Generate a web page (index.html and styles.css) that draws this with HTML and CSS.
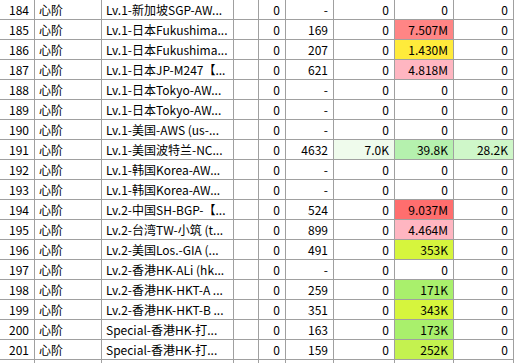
FILE: index.html
```html
<!DOCTYPE html>
<html lang="zh-CN">
<head>
<meta charset="utf-8">
<title>节点流量</title>
<link rel="stylesheet" href="styles.css">
</head>
<body>
<div class="grid">
  <div class="row"><div class="c n">184</div><div class="c t">心阶</div><div class="c t name">Lv.1-新加坡SGP-AW...</div><div class="c"></div><div class="c n">0</div><div class="c n">-</div><div class="c n">0</div><div class="c n">0</div><div class="c n">0</div></div>
  <div class="row"><div class="c n">185</div><div class="c t">心阶</div><div class="c t name">Lv.1-日本Fukushima...</div><div class="c"></div><div class="c n">0</div><div class="c n">169</div><div class="c n">0</div><div class="c n red">7.507M</div><div class="c n">0</div></div>
  <div class="row"><div class="c n">186</div><div class="c t">心阶</div><div class="c t name">Lv.1-日本Fukushima...</div><div class="c"></div><div class="c n">0</div><div class="c n">207</div><div class="c n">0</div><div class="c n yellow">1.430M</div><div class="c n">0</div></div>
  <div class="row"><div class="c n">187</div><div class="c t">心阶</div><div class="c t name">Lv.1-日本JP-M247【...</div><div class="c"></div><div class="c n">0</div><div class="c n">621</div><div class="c n">0</div><div class="c n pink">4.818M</div><div class="c n">0</div></div>
  <div class="row"><div class="c n">188</div><div class="c t">心阶</div><div class="c t name">Lv.1-日本Tokyo-AW...</div><div class="c"></div><div class="c n">0</div><div class="c n">-</div><div class="c n">0</div><div class="c n">0</div><div class="c n">0</div></div>
  <div class="row"><div class="c n">189</div><div class="c t">心阶</div><div class="c t name">Lv.1-日本Tokyo-AW...</div><div class="c"></div><div class="c n">0</div><div class="c n">-</div><div class="c n">0</div><div class="c n">0</div><div class="c n">0</div></div>
  <div class="row"><div class="c n">190</div><div class="c t">心阶</div><div class="c t name">Lv.1-美国-AWS (us-...</div><div class="c"></div><div class="c n">0</div><div class="c n">-</div><div class="c n">0</div><div class="c n">0</div><div class="c n">0</div></div>
  <div class="row"><div class="c n">191</div><div class="c t">心阶</div><div class="c t name">Lv.1-美国波特兰-NC...</div><div class="c"></div><div class="c n">0</div><div class="c n">4632</div><div class="c n g1">7.0K</div><div class="c n g2">39.8K</div><div class="c n g3">28.2K</div></div>
  <div class="row"><div class="c n">192</div><div class="c t">心阶</div><div class="c t name">Lv.1-韩国Korea-AW...</div><div class="c"></div><div class="c n">0</div><div class="c n">-</div><div class="c n">0</div><div class="c n">0</div><div class="c n">0</div></div>
  <div class="row"><div class="c n">193</div><div class="c t">心阶</div><div class="c t name">Lv.1-韩国Korea-AW...</div><div class="c"></div><div class="c n">0</div><div class="c n">-</div><div class="c n">0</div><div class="c n">0</div><div class="c n">0</div></div>
  <div class="row"><div class="c n">194</div><div class="c t">心阶</div><div class="c t name">Lv.2-中国SH-BGP-【...</div><div class="c"></div><div class="c n">0</div><div class="c n">524</div><div class="c n">0</div><div class="c n red2">9.037M</div><div class="c n">0</div></div>
  <div class="row"><div class="c n">195</div><div class="c t">心阶</div><div class="c t name">Lv.2-台湾TW-小筑 (t...</div><div class="c"></div><div class="c n">0</div><div class="c n">899</div><div class="c n">0</div><div class="c n pink">4.464M</div><div class="c n">0</div></div>
  <div class="row"><div class="c n">196</div><div class="c t">心阶</div><div class="c t name">Lv.2-美国Los.-GIA (...</div><div class="c"></div><div class="c n">0</div><div class="c n">491</div><div class="c n">0</div><div class="c n lime">353K</div><div class="c n">0</div></div>
  <div class="row"><div class="c n">197</div><div class="c t">心阶</div><div class="c t name">Lv.2-香港HK-ALi (hk...</div><div class="c"></div><div class="c n">0</div><div class="c n">-</div><div class="c n">0</div><div class="c n">0</div><div class="c n">0</div></div>
  <div class="row"><div class="c n">198</div><div class="c t">心阶</div><div class="c t name">Lv.2-香港HK-HKT-A ...</div><div class="c"></div><div class="c n">0</div><div class="c n">259</div><div class="c n">0</div><div class="c n green">171K</div><div class="c n">0</div></div>
  <div class="row"><div class="c n">199</div><div class="c t">心阶</div><div class="c t name">Lv.2-香港HK-HKT-B ...</div><div class="c"></div><div class="c n">0</div><div class="c n">351</div><div class="c n">0</div><div class="c n lime">343K</div><div class="c n">0</div></div>
  <div class="row"><div class="c n">200</div><div class="c t">心阶</div><div class="c t name">Special-香港HK-打...</div><div class="c"></div><div class="c n">0</div><div class="c n">163</div><div class="c n">0</div><div class="c n green">173K</div><div class="c n">0</div></div>
  <div class="row"><div class="c n">201</div><div class="c t">心阶</div><div class="c t name">Special-香港HK-打...</div><div class="c"></div><div class="c n">0</div><div class="c n">159</div><div class="c n">0</div><div class="c n lime2">252K</div><div class="c n">0</div></div>
  <div class="row tail"><div class="c"></div><div class="c"></div><div class="c"></div><div class="c"></div><div class="c"></div><div class="c"></div><div class="c"></div><div class="c"></div><div class="c"></div></div>
</div>
</body>
</html>
```
FILE: styles.css
```css
html, body {
  margin: 0;
  padding: 0;
  background: #ffffff;
}
body {
  font-family: "Noto Sans CJK SC", "Microsoft YaHei", sans-serif;
  font-size: 12px;
  color: #000000;
  overflow: hidden;
}
.grid {
  width: 514px;
}
.row {
  display: grid;
  grid-template-columns: 35px 67px 132px 25px 27px 48px 61px 59px 60px;
  height: 20px;
}
.c {
  box-sizing: border-box;
  border-right: 1px solid #a0a0a0;
  border-bottom: 1px solid #a0a0a0;
  height: 20px;
  line-height: 19px;
  white-space: nowrap;
  overflow: hidden;
}
.row.tail {
  height: 3px;
}
.row.tail .c {
  height: 3px;
  border-bottom: 0;
}
.n {
  text-align: right;
  padding-right: 5px;
}
.t {
  padding-left: 4px;
}
.name {
  text-overflow: ellipsis;
}
.red { background: #ff8585; }
.red2 { background: #ff6e6e; }
.yellow { background: #ffeb3b; }
.pink { background: #ffb6c1; }
.g1 { background: #effbec; }
.g2 { background: #b5f1ae; }
.g3 { background: #cff7c9; }
.lime { background: #d6f53d; }
.lime2 { background: #c4f24f; }
.green { background: #a9f06c; }
```
